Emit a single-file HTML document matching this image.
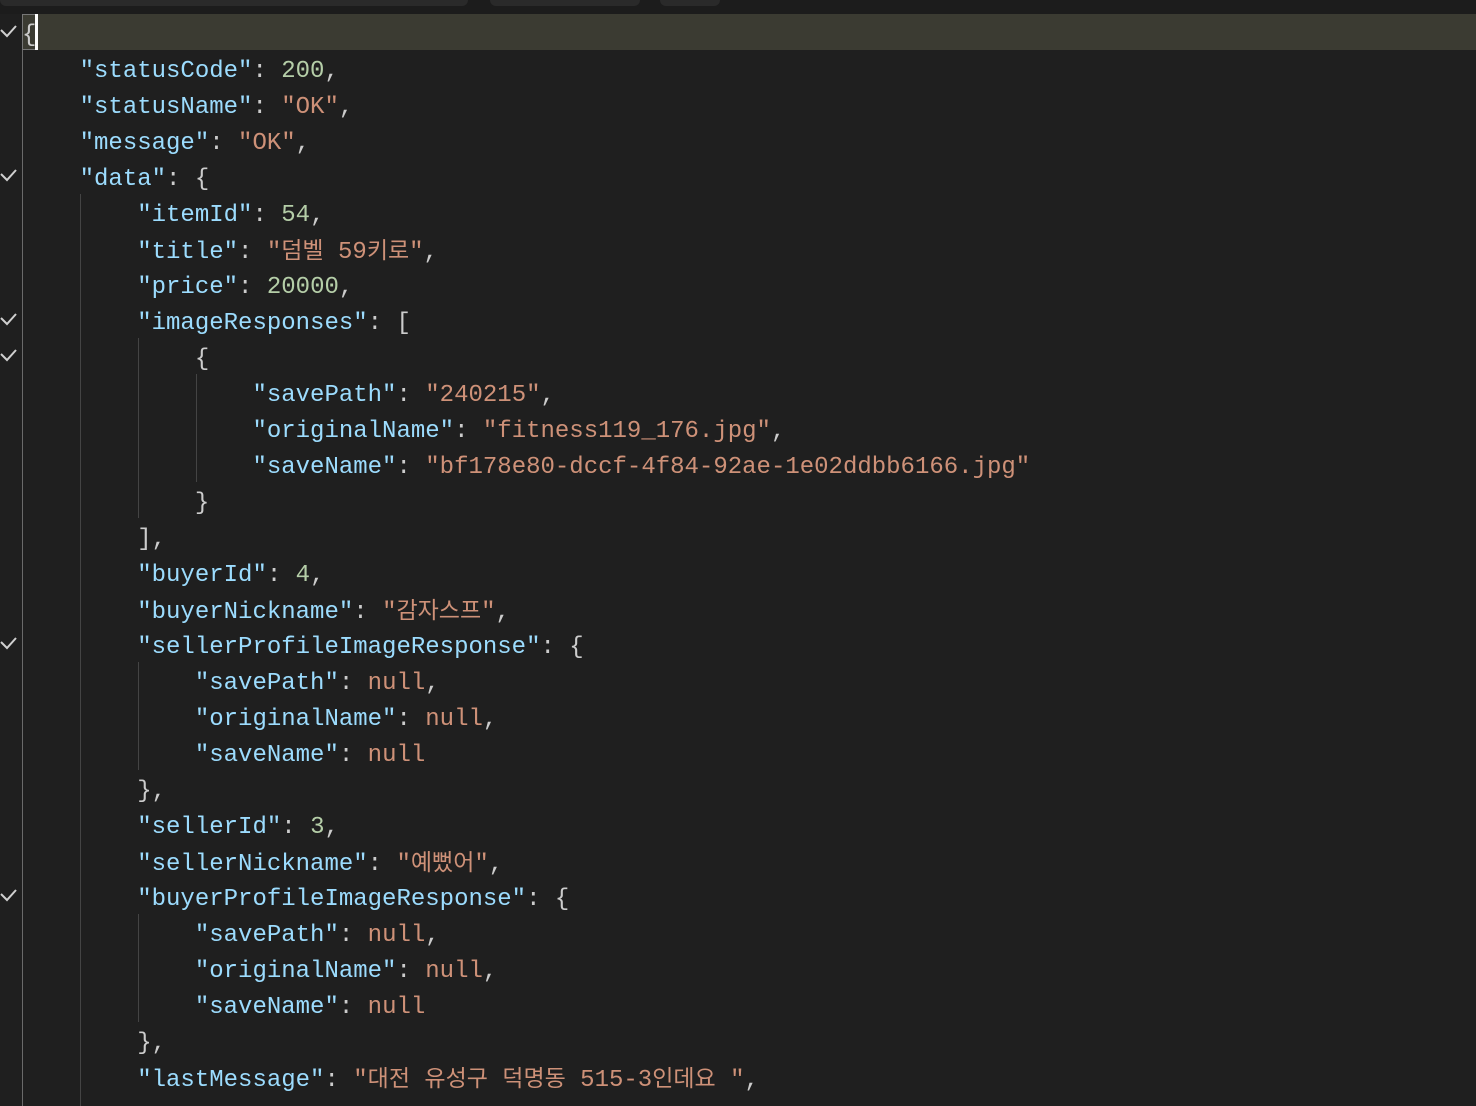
<!DOCTYPE html>
<html><head><meta charset="utf-8"><style>
html,body{margin:0;padding:0;background:#1f1f1f;width:1476px;height:1106px;overflow:hidden}
.top{position:absolute;left:0;top:0;width:1476px;height:14px;background:#1c1c1c}
.tab{position:absolute;top:0;height:6px;background:#2a2a2a;border-radius:0 0 6px 6px}
.hl{position:absolute;left:22px;top:14px;width:1454px;height:36px;background:#3b3b32}
.g{position:absolute;width:1px;background:#444}
.ln{position:absolute;left:22px;height:36px;line-height:36px;padding-top:4px;white-space:pre;font-family:"Liberation Mono","Noto Sans CJK KR",monospace;font-size:24px;color:#cccccc}
.k{color:#9cdcfe}.s{color:#ce9178}.n{color:#b5cea8}
.kr{font-size:23px}
</style></head><body>
<div class="top"><div class="tab" style="left:0;width:468px"></div><div class="tab" style="left:490px;width:150px;height:6px"></div><div class="tab" style="left:660px;width:60px"></div></div>
<div class="hl"></div>
<div style="position:absolute;left:22px;top:14px;width:15px;height:36px;border:1px solid #777;box-sizing:border-box"></div>
<div style="position:absolute;left:35px;top:14px;width:3px;height:36px;background:#fff"></div>
<div class="g" style="left:22px;top:50px;height:1056px;background:#6a6a6a"></div>
<div class="g" style="left:80px;top:194px;height:912px"></div>
<div class="g" style="left:138px;top:338px;height:180px"></div>
<div class="g" style="left:196px;top:374px;height:108px"></div>
<div class="g" style="left:138px;top:662px;height:108px"></div>
<div class="g" style="left:138px;top:914px;height:108px"></div>
<svg style="position:absolute;left:0;top:0" width="22" height="1106" fill="none" stroke="#d0d0d0" stroke-width="2">
<path d="M1 30l6 6 9-10"/><path d="M1 174l6 6 9-10"/><path d="M1 318l6 6 9-10"/><path d="M1 354l6 6 9-10"/><path d="M1 642l6 6 9-10"/><path d="M1 894l6 6 9-10"/>
</svg>
<div class="ln" style="top:14px">{</div>
<div class="ln" style="top:50px">    <span class="k">"statusCode"</span>: <span class="n">200</span>,</div>
<div class="ln" style="top:86px">    <span class="k">"statusName"</span>: <span class="s">"OK"</span>,</div>
<div class="ln" style="top:122px">    <span class="k">"message"</span>: <span class="s">"OK"</span>,</div>
<div class="ln" style="top:158px">    <span class="k">"data"</span>: {</div>
<div class="ln" style="top:194px">        <span class="k">"itemId"</span>: <span class="n">54</span>,</div>
<div class="ln" style="top:230px">        <span class="k">"title"</span>: <span class="s">"<span class="kr">덤벨</span> 59<span class="kr">키로</span>"</span>,</div>
<div class="ln" style="top:266px">        <span class="k">"price"</span>: <span class="n">20000</span>,</div>
<div class="ln" style="top:302px">        <span class="k">"imageResponses"</span>: [</div>
<div class="ln" style="top:338px">            {</div>
<div class="ln" style="top:374px">                <span class="k">"savePath"</span>: <span class="s">"240215"</span>,</div>
<div class="ln" style="top:410px">                <span class="k">"originalName"</span>: <span class="s">"fitness119_176.jpg"</span>,</div>
<div class="ln" style="top:446px">                <span class="k">"saveName"</span>: <span class="s">"bf178e80-dccf-4f84-92ae-1e02ddbb6166.jpg"</span></div>
<div class="ln" style="top:482px">            }</div>
<div class="ln" style="top:518px">        ],</div>
<div class="ln" style="top:554px">        <span class="k">"buyerId"</span>: <span class="n">4</span>,</div>
<div class="ln" style="top:590px">        <span class="k">"buyerNickname"</span>: <span class="s">"<span class="kr">감자스프</span>"</span>,</div>
<div class="ln" style="top:626px">        <span class="k">"sellerProfileImageResponse"</span>: {</div>
<div class="ln" style="top:662px">            <span class="k">"savePath"</span>: <span class="s">null</span>,</div>
<div class="ln" style="top:698px">            <span class="k">"originalName"</span>: <span class="s">null</span>,</div>
<div class="ln" style="top:734px">            <span class="k">"saveName"</span>: <span class="s">null</span></div>
<div class="ln" style="top:770px">        },</div>
<div class="ln" style="top:806px">        <span class="k">"sellerId"</span>: <span class="n">3</span>,</div>
<div class="ln" style="top:842px">        <span class="k">"sellerNickname"</span>: <span class="s">"<span class="kr">예뻤어</span>"</span>,</div>
<div class="ln" style="top:878px">        <span class="k">"buyerProfileImageResponse"</span>: {</div>
<div class="ln" style="top:914px">            <span class="k">"savePath"</span>: <span class="s">null</span>,</div>
<div class="ln" style="top:950px">            <span class="k">"originalName"</span>: <span class="s">null</span>,</div>
<div class="ln" style="top:986px">            <span class="k">"saveName"</span>: <span class="s">null</span></div>
<div class="ln" style="top:1022px">        },</div>
<div class="ln" style="top:1058px">        <span class="k">"lastMessage"</span>: <span class="s">"<span class="kr">대전</span> <span class="kr">유성구</span> <span class="kr">덕명동</span> 515-3<span class="kr">인데요</span> "</span>,</div>
</body></html>
